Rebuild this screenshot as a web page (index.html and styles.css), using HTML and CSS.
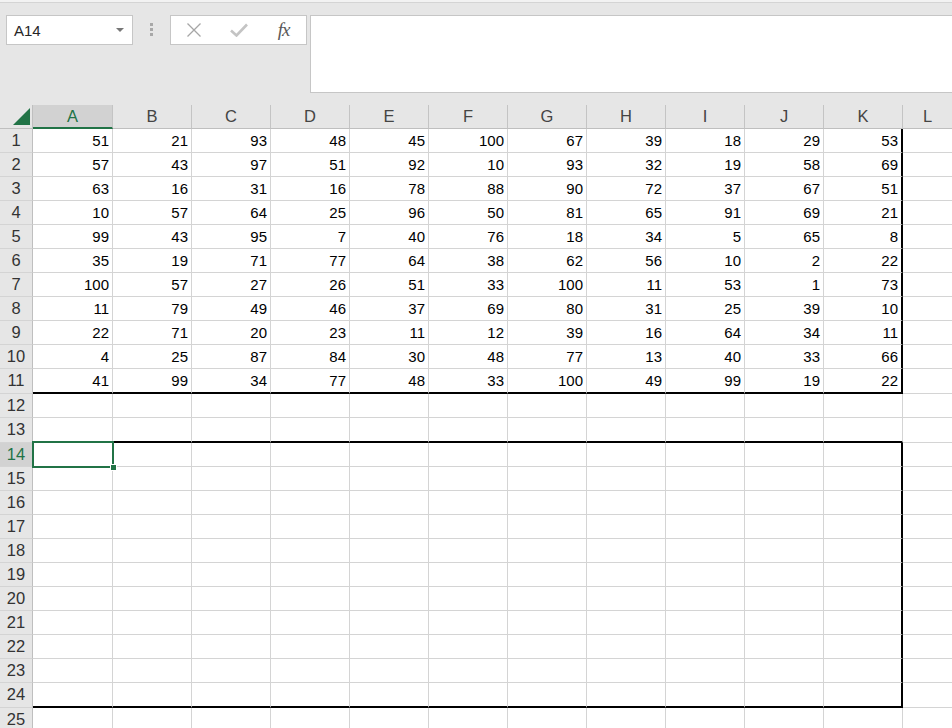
FILE: index.html
```html
<!DOCTYPE html>
<html>
<head>
    <link rel="stylesheet" href="styles.css">
</head>
<body>
    <div class="top-strip"></div>

    <div class="formula-bar">
        <div class="name-box">
            <span class="name-text">A14</span>
            <span class="name-arrow"></span>
        </div>
        <div class="grip"><i></i><i></i><i></i></div>
        <div class="fx-buttons">
            <svg class="icon" width="16" height="16" viewBox="0 0 16 16">
                <path d="M1.5 1.5 L14.5 14.5 M14.5 1.5 L1.5 14.5" stroke="#a6a6a6" stroke-width="1.3" fill="none"/>
            </svg>
            <svg class="icon" width="18" height="14" viewBox="0 0 18 14">
                <path d="M1 7.5 L6.5 12.5 L17 1.5" stroke="#c4c4c4" stroke-width="2.6" fill="none"/>
            </svg>
            <span class="fx">fx</span>
        </div>
        <div class="formula-input"></div>
    </div>

    <div class="sheet" id="sheet"></div>

    <script>
        const sheet = document.getElementById('sheet');
        const columns = ['A', 'B', 'C', 'D', 'E', 'F', 'G', 'H', 'I', 'J', 'K'];

        const data = [
            [51, 21, 93, 48, 45, 100, 67, 39, 18, 29, 53],
            [57, 43, 97, 51, 92, 10, 93, 32, 19, 58, 69],
            [63, 16, 31, 16, 78, 88, 90, 72, 37, 67, 51],
            [10, 57, 64, 25, 96, 50, 81, 65, 91, 69, 21],
            [99, 43, 95, 7, 40, 76, 18, 34, 5, 65, 8],
            [35, 19, 71, 77, 64, 38, 62, 56, 10, 2, 22],
            [100, 57, 27, 26, 51, 33, 100, 11, 53, 1, 73],
            [11, 79, 49, 46, 37, 69, 80, 31, 25, 39, 10],
            [22, 71, 20, 23, 11, 12, 39, 16, 64, 34, 11],
            [4, 25, 87, 84, 30, 48, 77, 13, 40, 33, 66],
            [41, 99, 34, 77, 48, 33, 100, 49, 99, 19, 22]
        ];

        // rows whose cells carry a thick bottom border
        const thickRows = [11, 13, 24];

        function add(className, text) {
            const div = document.createElement('div');
            div.className = className;
            if (text !== undefined) div.textContent = text;
            sheet.appendChild(div);
            return div;
        }

        // Header row
        const corner = add('corner');
        corner.innerHTML = '<svg width="17" height="17" viewBox="0 0 17 17"><polygon points="17,0 17,17 0,17" fill="#217346"/></svg>';
        columns.forEach(col => add(col === 'A' ? 'col-head selected' : 'col-head', col));
        add('col-head last', 'L');

        // Rows
        for (let r = 1; r <= 25; r++) {
            add(r === 14 ? 'row-head selected' : 'row-head', r);

            columns.forEach((col, c) => {
                let cls = 'cell';
                const inBlock = r <= 11 || (r >= 14 && r <= 24);
                if (col === 'K' && inBlock) cls += ' edge-r';
                if (thickRows.includes(r)) cls += ' edge-b';

                const value = r <= 11 ? data[r - 1][c] : '';
                const cell = add(cls, value);

                // Active cell A14
                if (r === 14 && col === 'A') {
                    cell.classList.add('active');
                    const sel = document.createElement('div');
                    sel.className = 'selection';
                    sel.innerHTML = '<span class="fill-handle"></span>';
                    cell.appendChild(sel);
                }
            });

            add('cell last');
        }
    </script>
</body>
</html>
```

FILE: styles.css
```css
body {
    margin: 0;
    background: #e6e6e6;
    font-family: "Liberation Sans", Arial, sans-serif;
    overflow: hidden;
    height: 728px;
}

.top-strip {
    height: 2px;
    background: #f2f2f2;
    border-bottom: 1px solid #d4d4d4;
}

/* Formula bar */

.formula-bar {
    display: flex;
    align-items: flex-start;
    padding: 12px 0 0 6px;
    height: 90px;
    box-sizing: border-box;
}

.name-box {
    width: 127px;
    height: 30px;
    box-sizing: border-box;
    background: white;
    border: 1px solid #c6c6c6;
    display: flex;
    align-items: center;
    justify-content: space-between;
    padding: 0 8px 0 7px;
}

.name-text {
    font-size: 15px;
    color: #262626;
}

.name-arrow {
    width: 0;
    height: 0;
    border-left: 4px solid transparent;
    border-right: 4px solid transparent;
    border-top: 4px solid #777;
}

.grip {
    margin: 8px 17px 0 17px;
    display: flex;
    flex-direction: column;
    gap: 2px;
}

.grip i {
    display: block;
    width: 3px;
    height: 3px;
    background: #a8a8a8;
}

.fx-buttons {
    width: 137px;
    height: 30px;
    box-sizing: border-box;
    background: white;
    border: 1px solid #c6c6c6;
    display: grid;
    grid-template-columns: repeat(3, 45px);
    align-items: center;
    justify-items: center;
}

.icon {
    display: block;
}

.fx {
    font-family: "Liberation Serif", "Times New Roman", serif;
    font-style: italic;
    font-size: 19px;
    color: #595959;
    line-height: 1;
    margin-top: -2px;
    letter-spacing: -1px;
}

.formula-input {
    margin-left: 3px;
    flex: 1;
    height: 78px;
    box-sizing: border-box;
    background: white;
    border: 1px solid #c6c6c6;
    border-right: none;
}

/* Grid: rows with a thick bottom border are one pixel taller */

.sheet {
    margin-top: 12px;
    display: grid;
    grid-template-columns: 33px 80px repeat(10, 79px) 1fr;
    grid-template-rows: 24px repeat(10, 24px) 25px 24px 25px repeat(10, 24px) 25px 24px;
    background: white;
    font-size: 15px;
    line-height: 23px;
}

.sheet > * {
    box-sizing: border-box;
}

.corner {
    background: #e6e6e6;
    border-right: 1px solid #bfbfbf;
    border-bottom: 1px solid #bfbfbf;
    display: flex;
    align-items: flex-end;
    justify-content: flex-end;
    padding: 0 2px 3px 0;
}

.corner svg {
    display: block;
}

.col-head {
    background: #e6e6e6;
    border-right: 1px solid #c4c4c4;
    border-bottom: 1px solid #bfbfbf;
    text-align: center;
    color: #444;
    font-size: 16.5px;
}

.col-head.selected {
    background: #d2d2d2;
    color: #217346;
    border-bottom: 2px solid #217346;
}

.col-head.last {
    border-right: none;
}

.row-head {
    background: #e6e6e6;
    border-right: 1px solid #bfbfbf;
    border-bottom: 1px solid #d4d4d4;
    text-align: center;
    color: #333;
    font-size: 16.5px;
}

.row-head.selected {
    background: #d2d2d2;
    color: #217346;
}

.cell {
    border-right: 1px solid #d4d4d4;
    border-bottom: 1px solid #d4d4d4;
    text-align: right;
    padding-right: 3px;
    color: #000;
}

.cell.last {
    border-right: none;
}

.cell.edge-r {
    border-right: 2px solid #000;
}

.cell.edge-b {
    border-bottom: 2px solid #000;
}

/* Active cell */

.cell.active {
    position: relative;
}

.selection {
    position: absolute;
    top: -2px;
    left: -1px;
    width: 82px;
    height: 27px;
    box-sizing: border-box;
    border: 2px solid #217346;
}

.fill-handle {
    position: absolute;
    right: -5px;
    bottom: -5px;
    width: 5px;
    height: 5px;
    background: #217346;
    border: 1px solid white;
}
```
